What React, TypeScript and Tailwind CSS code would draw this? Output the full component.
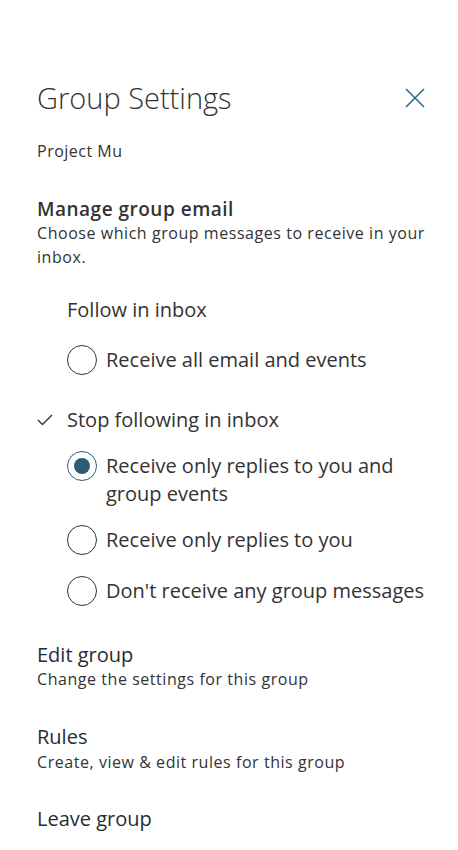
import React from "react";

const font = { fontFamily: '"Open Sans", "Noto Sans", sans-serif' };

function Radio({ checked }: { checked?: boolean }) {
  return checked ? (
    <span className="flex h-[30px] w-[30px] shrink-0 items-center justify-center rounded-full border border-[#2b5d74]">
      <span className="h-[16px] w-[16px] rounded-full bg-[#2b5d74]" />
    </span>
  ) : (
    <span className="h-[30px] w-[30px] shrink-0 rounded-full border border-[#333333]" />
  );
}

export default function App() {
  return (
    <div className="min-h-[850px] w-[458px] bg-white text-[#333333]" style={font}>
      <div className="flex flex-col pl-[37px] pr-[30px]">
        <div className="mt-[80px] flex h-[36px] items-center justify-between">
          <h1 className="text-[29px] font-light leading-[36px] text-[#333333]">Group Settings</h1>
          <button className="flex h-[26px] w-[26px] items-center justify-center text-[#2d6a88]" aria-label="Close">
            <svg width="20" height="20" viewBox="0 0 20 20" fill="none" stroke="currentColor" strokeWidth="1.6">
              <path d="M1 1 L19 19 M19 1 L1 19" />
            </svg>
          </button>
        </div>
        <div className="mt-[25px] text-[16px] leading-[20px] tracking-[0.5px]">Project Mu</div>
        <div className="mt-[36px] text-[19px] font-semibold leading-[24px] tracking-[0.5px]">Manage group email</div>
        <div className="text-[16px] leading-[24px] tracking-[0.55px]">
          Choose which group messages to receive in your
          <br />
          inbox.
        </div>

        <div className="mt-[27px] pl-[30px] text-[20px] leading-[28px]">Follow in inbox</div>
        <div className="mt-[21px] flex items-start gap-[9px] pl-[30px]">
          <Radio />
          <span className="text-[20px] leading-[30px]">Receive all email and events</span>
        </div>

        <div className="mt-[31px] flex items-center text-[20px] leading-[28px]">
          <span className="flex w-[30px] shrink-0 items-center">
            <svg width="16" height="12" viewBox="0 0 16 12" fill="none" stroke="#333333" strokeWidth="1.4">
              <path d="M1 6 L5.5 10.5 L15 1" />
            </svg>
          </span>
          Stop following in inbox
        </div>
        <div className="mt-[18px] flex items-start gap-[9px] pl-[30px]">
          <span className="mt-[-1px]"><Radio checked /></span>
          <span className="text-[20px] leading-[28px]">
            Receive only replies to you and
            <br />
            group events
          </span>
        </div>
        <div className="mt-[17px] flex items-start gap-[9px] pl-[30px]">
          <Radio />
          <span className="text-[20px] leading-[30px]">Receive only replies to you</span>
        </div>
        <div className="mt-[21px] flex items-start gap-[9px] pl-[30px]">
          <Radio />
          <span className="whitespace-nowrap text-[20px] leading-[30px]">Don't receive any group messages</span>
        </div>

        <div className="mt-[37px] text-[20px] leading-[24px] text-[#1e2d36]">Edit group</div>
        <div className="text-[16px] leading-[24px] tracking-[0.55px]">Change the settings for this group</div>
        <div className="mt-[34px] text-[20px] leading-[24px] text-[#1e2d36]">Rules</div>
        <div className="mt-[1px] text-[16px] leading-[24px] tracking-[0.55px]">Create, view &amp; edit rules for this group</div>
        <div className="mt-[33px] text-[20px] leading-[24px] text-[#1e2d36]">Leave group</div>
      </div>
    </div>
  );
}
